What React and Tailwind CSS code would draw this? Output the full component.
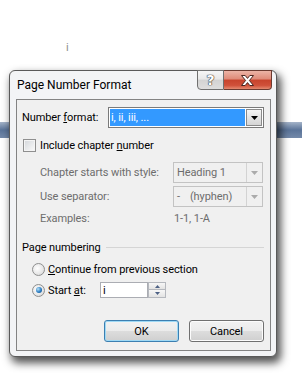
import React from "react";

function Caret({ color }) {
  return (
    <svg width="7" height="4" viewBox="0 0 7 4">
      <path d="M0 0H7L3.5 4Z" fill={color} />
    </svg>
  );
}

function DisabledSelect({ children }) {
  return (
    <div className="w-[90px] h-[21px] border border-[#c3c3c3] bg-[#f0f0f0] flex">
      <div className="flex-1 pl-[3px] flex items-center text-[#6d6d6d]">{children}</div>
      <div className="w-[16px] border-l border-[#d3d3d3] flex items-center justify-center">
        <Caret color="#ababab" />
      </div>
    </div>
  );
}

function Radio({ checked }) {
  return (
    <div className="w-[13px] h-[13px] rounded-full border border-[#8e8f8f] bg-[radial-gradient(circle_at_40%_40%,#ffffff,#e6e6e6_60%,#cdcdcd)] flex items-center justify-center">
      {checked && (
        <div className="w-[6px] h-[6px] rounded-full bg-[radial-gradient(circle_at_35%_35%,#b7e3fa,#2a7cc2_55%,#0b4782)]" />
      )}
    </div>
  );
}

export default function App() {
  return (
    <div className="relative w-[302px] h-[380px] overflow-hidden bg-white font-['Roboto',sans-serif]">
      <div className="h-[122px] pl-[66px] pt-[41px] text-[11px] leading-[13px] text-[#8c8c8c]">i</div>
      <div className="h-[16px] bg-gradient-to-b from-[#a5b4c9] via-[#5a7398] to-[#7389a9]" />

      <div className="absolute left-[9px] top-[70px] w-[268px] h-[287px] rounded-[6px] border border-[#5a5a5a] bg-[#f3f4f6] shadow-[3px_5px_9px_1px_rgba(0,0,0,0.68)] flex flex-col">
        <div className="h-[28px] flex items-start justify-between">
          <div className="pl-[7px] pt-[6px] text-[12px] leading-[16px] text-black">Page Number Format</div>
          <div className="flex mr-[4px] -mt-[1px] h-[20px]">
            <div className="w-[27px] h-[20px] border border-[#707070] rounded-bl-[4px] bg-[linear-gradient(#f6f6f6_0%,#e8e8e8_45%,#d3d3d3_50%,#dedede_100%)] flex items-center justify-center text-[14px] leading-[14px] font-bold text-white font-['DejaVu_Sans',sans-serif] [text-shadow:0_0_1px_#333,0_0_1px_#333,0_0_1px_#333]">
              ?
            </div>
            <div className="w-[48px] h-[20px] border border-l-0 border-[#6b3a30] rounded-br-[4px] bg-[linear-gradient(#ecb4a6_0%,#df8a78_45%,#c8432c_50%,#d0513a_80%,#e48a70_100%)] flex items-center justify-center">
              <svg width="15" height="11" viewBox="0 0 15 11">
                <path
                  d="M1.5 0.5H5.2L7.5 3.4L9.8 0.5H13.5L9.4 5.5L13.5 10.5H9.8L7.5 7.6L5.2 10.5H1.5L5.6 5.5Z"
                  fill="#ffffff"
                  stroke="#4a2620"
                  strokeWidth="1"
                  strokeLinejoin="round"
                />
              </svg>
            </div>
          </div>
        </div>

        <div className="ml-[6px] w-[255px] h-[252px] border border-[#838383] bg-[#f0f0f0] flex flex-col text-[11px] leading-[13px] tracking-[-0.1px] text-black">
          <div className="mt-[7px] h-[21px] flex items-center pl-[5px]">
            <div className="w-[86px]">
              Number <span className="underline underline-offset-[1px]">f</span>ormat:
            </div>
            <div className="w-[156px] h-[21px] border border-[#7a7a7a] bg-white p-[1px] flex">
              <div className="flex-1 bg-[#3399ff] text-white pl-[1px] flex items-center">i, ii, iii, ...</div>
              <div className="ml-[1px] w-[16px] border border-[#8a8a8a] bg-[linear-gradient(#f6f6f6,#e4e4e4_50%,#d6d6d6)] flex items-center justify-center">
                <Caret color="#000000" />
              </div>
            </div>
          </div>

          <div className="mt-[11px] h-[13px] flex items-center pl-[6px]">
            <div className="w-[13px] h-[13px] border border-[#8f8f8f] bg-gradient-to-br from-[#d3d6da] to-[#fbfbfb] shadow-[inset_0_0_0_1px_#f4f4f4]" />
            <div className="ml-[4px]">
              Include chapter <span className="underline underline-offset-[1px]">n</span>umber
            </div>
          </div>

          <div className="mt-[10px] h-[21px] flex items-center pl-[23px]">
            <div className="w-[133px] text-[#6d6d6d]">Chapter starts with style:</div>
            <DisabledSelect>Heading 1</DisabledSelect>
          </div>

          <div className="mt-[3px] h-[21px] flex items-center pl-[23px]">
            <div className="w-[133px] text-[#6d6d6d]">Use separator:</div>
            <DisabledSelect>
              <span>-</span>
              <span className="ml-[10px]">(hyphen)</span>
            </DisabledSelect>
          </div>

          <div className="mt-[5px] h-[13px] flex items-center pl-[23px] text-[#6d6d6d]">
            <div className="w-[134px]">Examples:</div>
            <div>1-1, 1-A</div>
          </div>

          <div className="mt-[16px] h-[13px] flex items-center pl-[5px] pr-[6px]">
            <div>Page numbering</div>
            <div className="flex-1 ml-[5px] border-t border-[#d5d5d5]" />
          </div>

          <div className="mt-[9px] h-[13px] flex items-center pl-[15px]">
            <Radio />
            <div className="ml-[3px]">
              <span className="underline underline-offset-[1px]">C</span>ontinue from previous section
            </div>
          </div>

          <div className="mt-[6px] h-[16px] flex items-center pl-[15px]">
            <Radio checked />
            <div className="ml-[3px] w-[52px]">
              Start <span className="underline underline-offset-[1px]">a</span>t:
            </div>
            <div className="w-[48px] h-[16px] border border-[#abadb3] bg-white pl-[2px] flex items-center">i</div>
            <div className="w-[18px] h-[16px] flex flex-col">
              <div className="h-[8px] border border-[#b5b8be] bg-[linear-gradient(#f7f7f7,#e3e3e3)] flex items-center justify-center">
                <svg width="5" height="3" viewBox="0 0 5 3">
                  <path d="M0 3H5L2.5 0Z" fill="#4d6185" />
                </svg>
              </div>
              <div className="h-[8px] border border-t-0 border-[#b5b8be] bg-[linear-gradient(#f7f7f7,#e3e3e3)] flex items-center justify-center">
                <svg width="5" height="3" viewBox="0 0 5 3">
                  <path d="M0 0H5L2.5 3Z" fill="#4d6185" />
                </svg>
              </div>
            </div>
          </div>

          <div className="mt-[22px] h-[22px] flex justify-end gap-[10px] pr-[6px]">
            <div className="w-[75px] h-[22px] rounded-[3px] border border-[#3c7fb1] shadow-[inset_0_0_0_1px_#9fd9f5] bg-[linear-gradient(#f2f2f2_0%,#ebebeb_50%,#dddddd_50%,#cfcfcf_100%)] flex items-center justify-center">
              OK
            </div>
            <div className="w-[75px] h-[22px] rounded-[3px] border border-[#707070] shadow-[inset_0_0_0_1px_#fcfcfc] bg-[linear-gradient(#f2f2f2_0%,#ebebeb_50%,#dddddd_50%,#cfcfcf_100%)] flex items-center justify-center">
              Cancel
            </div>
          </div>
        </div>
      </div>
    </div>
  );
}
